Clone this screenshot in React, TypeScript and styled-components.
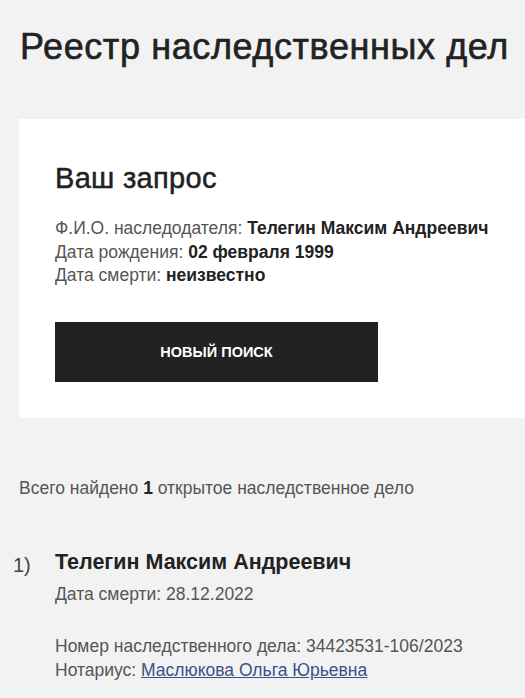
import styled, { createGlobalStyle } from 'styled-components';

const GlobalStyle = createGlobalStyle`
  html, body {
    margin: 0;
    padding: 0;
    background: #f2f2f2;
    font-family: "Liberation Sans", Arial, sans-serif;
    color: #222;
  }
`;

const Page = styled.div`
  display: flex;
  flex-direction: column;
  padding: 23px 0 20px 19px;
`;

const Title = styled.h1`
  margin: 0 0 0 1px;
  font-size: 36px;
  font-weight: 400;
  letter-spacing: 0.6px;
  line-height: 48px;
  color: #222;
  -webkit-text-stroke: 0.6px #222;
  white-space: nowrap;
`;

const Card = styled.div`
  margin-top: 48px;
  background: #fff;
  padding: 42px 0 36px 36px;
  display: flex;
  flex-direction: column;
`;

const CardTitle = styled.h2`
  margin: 0;
  font-size: 29px;
  font-weight: 400;
  letter-spacing: 0.3px;
  line-height: 34px;
  color: #222;
  -webkit-text-stroke: 0.5px #222;
`;

const Details = styled.div`
  margin-top: 22px;
  display: flex;
  flex-direction: column;
`;

const Line = styled.div`
  font-size: 17.5px;
  line-height: 23.5px;
  color: #555;
  white-space: nowrap;
`;

const Strong = styled.b`
  color: #222;
  font-weight: 700;
`;

const Button = styled.button`
  margin-top: 34px;
  width: 323px;
  height: 60px;
  border: 0;
  background: #222;
  color: #fff;
  font-family: "Liberation Sans", Arial, sans-serif;
  font-size: 14.5px;
  font-weight: 700;
  text-transform: uppercase;
  cursor: pointer;
`;

const Summary = styled.div`
  margin-top: 58px;
  font-size: 17.5px;
  line-height: 24px;
  color: #555;
  white-space: nowrap;
`;

const Result = styled.div`
  margin-top: 47px;
  margin-left: -6px;
  display: grid;
  grid-template-columns: 42px 1fr;
`;

const Num = styled.div`
  font-size: 20px;
  line-height: 30px;
  color: #444;
  padding-top: 3px;
`;

const ResultBody = styled.div`
  display: flex;
  flex-direction: column;
`;

const Name = styled.div`
  font-size: 21.5px;
  font-weight: 700;
  line-height: 30px;
  color: #222;
`;

const Info = styled.div<{ $gap?: number }>`
  margin-top: ${(p) => p.$gap ?? 0}px;
  font-size: 17.5px;
  line-height: 23.5px;
  color: #555;
  white-space: nowrap;
`;

const Link = styled.a`
  color: #3b5186;
  text-decoration: underline;
`;

export default function App() {
  return (
    <>
      <GlobalStyle />
      <Page>
        <Title>Реестр наследственных дел</Title>
        <Card>
          <CardTitle>Ваш запрос</CardTitle>
          <Details>
            <Line>
              Ф.И.О. наследодателя: <Strong>Телегин Максим Андреевич</Strong>
            </Line>
            <Line>
              Дата рождения: <Strong>02 февраля 1999</Strong>
            </Line>
            <Line>
              Дата смерти: <Strong>неизвестно</Strong>
            </Line>
          </Details>
          <Button>Новый поиск</Button>
        </Card>
        <Summary>
          Всего найдено <Strong>1</Strong> открытое наследственное дело
        </Summary>
        <Result>
          <Num>1)</Num>
          <ResultBody>
            <Name>Телегин Максим Андреевич</Name>
            <Info $gap={6}>Дата смерти: 28.12.2022</Info>
            <Info $gap={29}>Номер наследственного дела: 34423531-106/2023</Info>
            <Info>
              Нотариус: <Link href="#">Маслюкова Ольга Юрьевна</Link>
            </Info>
          </ResultBody>
        </Result>
      </Page>
    </>
  );
}
